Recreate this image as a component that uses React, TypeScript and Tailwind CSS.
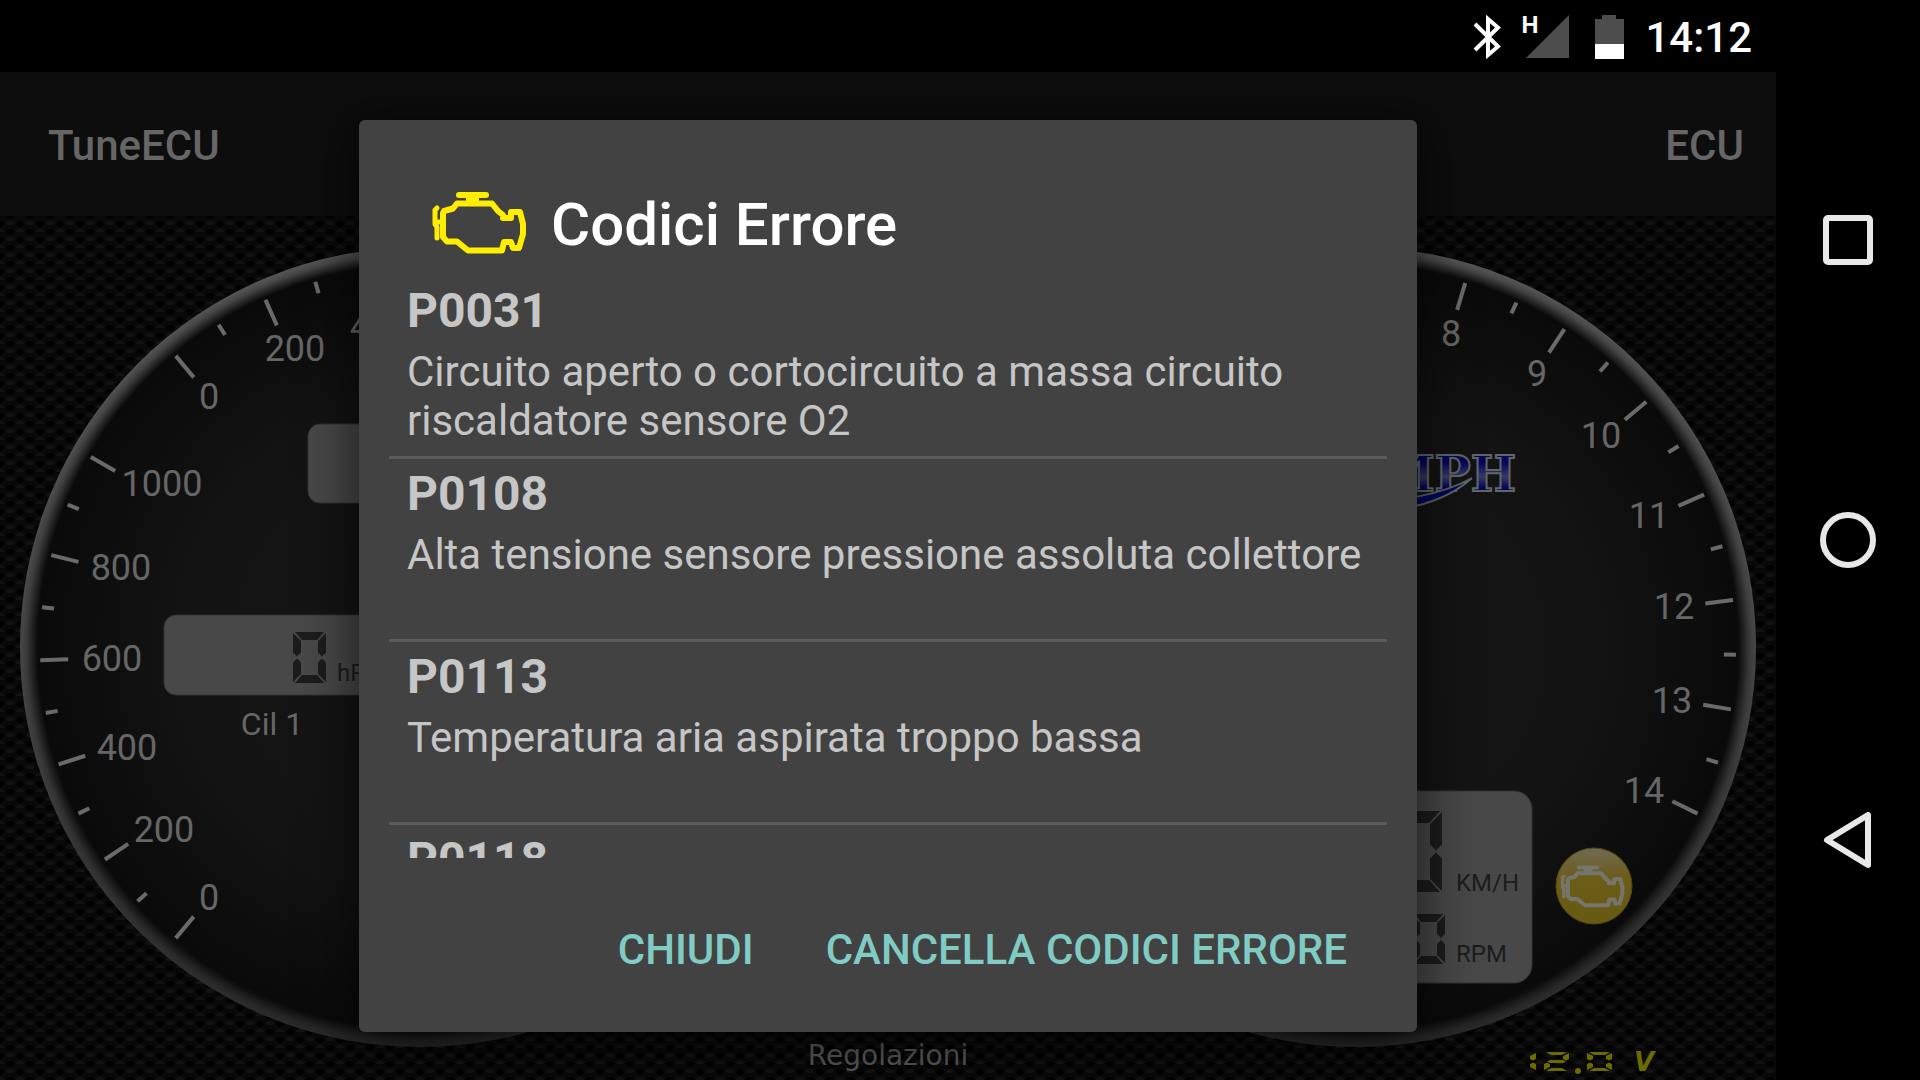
import React from "react";

const ERRORS: { code: string; text?: string }[] = [
  { code: "P0031", text: "Circuito aperto o cortocircuito a massa circuito riscaldatore sensore O2" },
  { code: "P0108", text: "Alta tensione sensore pressione assoluta collettore" },
  { code: "P0113", text: "Temperatura aria aspirata troppo bassa" },
  { code: "P0118" },
];

const SEGMENTS: Record<string, string> = {
  "0": "abcdef",
  "1": "bc",
  "2": "abged",
};

function Engine() {
  return (
    <g fill="none" stroke="currentColor" strokeWidth={6} strokeLinejoin="round">
      <path d="M23 30 L32 27.5 L36 22.5 H71 L77 30 L82 34 V37 H90 V31 L99 31 L102 43 V53 L98 67 H92 L90 61 H83 L81 69.5 H47 L36 60.5 H26 L22 56 V32 Z" />
      <path d="M38 14 H65" strokeLinecap="round" />
      <path d="M51.5 14 V23" strokeWidth={13} />
      <path d="M16 27 L14 29 V43 L16 46 V57 M16 41 H22" strokeWidth={5} strokeLinecap="round" />
    </g>
  );
}

/* One cell of a seven-segment readout: t is the thickness of the upright bars, v of the flat ones. */
function Segment({
  digit,
  x,
  y,
  w,
  h,
  t,
  v = t,
}: {
  digit: string;
  x: number;
  y: number;
  w: number;
  h: number;
  t: number;
  v?: number;
}) {
  const m = h / 2;
  const d = v / 2;
  const shapes: Record<string, string> = {
    a: `2,0 ${w - 2},0 ${w - t - 1},${v} ${t + 1},${v}`,
    d: `2,${h} ${w - 2},${h} ${w - t - 1},${h - v} ${t + 1},${h - v}`,
    f: `0,1 ${t},${v + 1} ${t},${m - d - 1} ${t / 2},${m - 1} 0,${m - d - 1}`,
    e: `0,${h - 1} ${t},${h - v - 1} ${t},${m + d + 1} ${t / 2},${m + 1} 0,${m + d + 1}`,
    b: `${w},1 ${w - t},${v + 1} ${w - t},${m - d - 1} ${w - t / 2},${m - 1} ${w},${m - d - 1}`,
    c: `${w},${h - 1} ${w - t},${h - v - 1} ${w - t},${m + d + 1} ${w - t / 2},${m + 1} ${w},${m + d + 1}`,
    g: `${t / 2},${m} ${t},${m - d} ${w - t},${m - d} ${w - t / 2},${m} ${w - t},${m + d} ${t},${m + d}`,
  };
  return (
    <g transform={`translate(${x} ${y})`}>
      {SEGMENTS[digit].split("").map((s) => (
        <polygon key={s} points={shapes[s]} />
      ))}
    </g>
  );
}

function Ticks({ cx, angles }: { cx: number; angles: { a: number; major: boolean }[] }) {
  return (
    <g stroke="#6a6a6a" strokeWidth={4}>
      {angles.map(({ a, major }) => {
        const r = (a * Math.PI) / 180;
        const inner = major ? 352 : 368;
        return (
          <line
            key={a}
            x1={cx + 380 * Math.cos(r)}
            y1={431 + 380 * Math.sin(r)}
            x2={cx + inner * Math.cos(r)}
            y2={431 + inner * Math.sin(r)}
          />
        );
      })}
    </g>
  );
}

const range = (start: number, step: number, n: number) =>
  Array.from({ length: n }, (_, i) => ({ a: start + step * i, major: i % 2 === 0 }));

const LEFT_TICKS = [...range(130, 8, 11), ...range(230, 8, 5)];
const RIGHT_TICKS = range(26, -8.275, 13);

const LABELS: [string, number, number][] = [
  ["0", 209, 193],
  ["200", 295, 145],
  ["400", 380, 123],
  ["1000", 162, 280],
  ["800", 121, 364],
  ["600", 112, 455],
  ["400", 127, 544],
  ["200", 164, 626],
  ["0", 209, 694],
  ["8", 1451, 130],
  ["9", 1537, 170],
  ["10", 1601, 232],
  ["11", 1649, 312],
  ["12", 1674, 403],
  ["13", 1672, 497],
  ["14", 1644, 587],
];

function Gauge({ cx, face }: { cx: number; face: string }) {
  return (
    <g>
      <circle cx={cx} cy={431} r={400} fill="url(#rim)" />
      <circle cx={cx} cy={431} r={400} fill={face} />
    </g>
  );
}

function FaceGradient({ id, cx }: { id: string; cx: number }) {
  return (
    <radialGradient id={id} gradientUnits="userSpaceOnUse" cx={cx} cy={431} r={400}>
      <stop offset="0" stopColor="#151515" />
      <stop offset="0.6" stopColor="#131313" />
      <stop offset="0.95" stopColor="#0a0a0a" />
      <stop offset="0.956" stopColor="#0a0a0a" />
      <stop offset="0.985" stopColor="#0a0a0a" stopOpacity="0.2" />
      <stop offset="1" stopColor="#0a0a0a" stopOpacity="0" />
    </radialGradient>
  );
}

function Dashboard() {
  return (
    <svg
      className="block h-full w-full"
      viewBox="0 0 1776 864"
      preserveAspectRatio="xMidYMid slice"
      fontFamily="Roboto, sans-serif"
      role="img"
      aria-label="Quadro strumenti"
    >
      <defs>
        <pattern id="mesh" width="20" height="16" patternUnits="userSpaceOnUse">
          <rect width="20" height="16" fill="#090909" />
          <ellipse cx="0" cy="8" rx="4" ry="3" fill="#010101" />
          <ellipse cx="20" cy="8" rx="4" ry="3" fill="#010101" />
          <ellipse cx="10" cy="0" rx="4" ry="3" fill="#010101" />
          <ellipse cx="10" cy="16" rx="4" ry="3" fill="#010101" />
          <ellipse cx="10" cy="7" rx="4" ry="2" fill="#131313" />
          <ellipse cx="0" cy="15" rx="4" ry="2" fill="#131313" />
          <ellipse cx="20" cy="15" rx="4" ry="2" fill="#131313" />
        </pattern>
        <linearGradient id="rim" x1="0" y1="0" x2="0" y2="1">
          <stop offset="0" stopColor="#585858" />
          <stop offset="0.5" stopColor="#484848" />
          <stop offset="1" stopColor="#2a2a2a" />
        </linearGradient>
        <FaceGradient id="faceLeft" cx={420} />
        <FaceGradient id="faceRight" cx={1356} />
        <linearGradient id="metal" x1="0" y1="0" x2="0" y2="1">
          <stop offset="0.3" stopColor="#05055c" />
          <stop offset="0.55" stopColor="#3a3a66" />
          <stop offset="0.75" stopColor="#03035a" />
        </linearGradient>
        <linearGradient id="lamp" x1="0" y1="0" x2="0" y2="1">
          <stop offset="0" stopColor="#706a55" />
          <stop offset="0.4" stopColor="#6b5c18" />
          <stop offset="1" stopColor="#675a12" />
        </linearGradient>
      </defs>

      <rect width="1776" height="864" fill="url(#mesh)" />
      <Gauge cx={420} face="url(#faceLeft)" />
      <Gauge cx={1356} face="url(#faceRight)" />
      <Ticks cx={420} angles={LEFT_TICKS} />
      <Ticks cx={1356} angles={RIGHT_TICKS} />

      <g fill="#666666" fontSize="36" textAnchor="middle">
        {LABELS.map(([t, x, y]) => (
          <text key={`${t}-${y}`} x={x} y={y}>
            {t}
          </text>
        ))}
      </g>

      <g fill="#484848" stroke="#333333">
        <rect x="308" y="208" width="230" height="79" rx="12" />
        <rect x="164" y="399" width="230" height="80" rx="12" />
        <rect x="1290" y="575" width="242" height="192" rx="18" />
      </g>
      <g fill="#1c1c1c">
        <Segment digit="0" x={293} y={416} w={33} h={51} t={8} />
        <Segment digit="0" x={1390} y={595} w={52} h={81} t={12} />
        <Segment digit="0" x={1412} y={698} w={33} h={50} t={8} />
        <g fontSize="24">
          <text x="337" y="465">
            hPa
          </text>
          <text x="1456" y="675">
            KM/H
          </text>
          <text x="1456" y="746">
            RPM
          </text>
        </g>
      </g>
      <text x="272" y="519" fontSize="32" textAnchor="middle" fill="#666666">
        Cil 1
      </text>

      <text
        x="1516"
        y="275"
        fontFamily="DejaVu Serif, serif"
        fontWeight="700"
        fontSize="48"
        textAnchor="end"
        fill="url(#metal)"
        stroke="#606668"
        strokeWidth="2"
      >
        TRIUMPH
      </text>
      <path
        d="M1340 296 Q1430 300 1472 262 Q1430 286 1340 288 Z"
        fill="#05055c"
        stroke="#606668"
        strokeWidth="2"
      />

      <circle cx="1594" cy="670" r="38" fill="url(#lamp)" stroke="#57480d" />
      <g transform="translate(1553 642) scale(0.68)" color="#75756c">
        <Engine />
      </g>

      <g fill="#6b6b00">
        <Segment digit="1" x={1512} y={836} w={24} h={19} t={6} v={3} />
        <Segment digit="2" x={1544} y={836} w={25} h={19} t={6} v={3} />
        <circle cx="1578" cy="855" r="3" />
        <Segment digit="0" x={1587} y={836} w={25} h={19} t={6} v={3} />
        <text
          x="1634"
          y="855"
          fontFamily="DejaVu Sans, sans-serif"
          fontSize="26"
          fontStyle="italic"
          fontWeight="700"
        >
          V
        </text>
      </g>
    </svg>
  );
}

function StatusBar() {
  return (
    <div className="flex h-18 shrink-0 items-center justify-end bg-black pt-0.5 pr-6 text-white">
      <svg className="h-11 w-7" viewBox="0 0 28 44" aria-label="Bluetooth" role="img">
        <path d="M2 9 L25 31.5 L15 40 V4 L25 12.5 L2 35" fill="none" stroke="#fff" strokeWidth="4" />
      </svg>
      <div className="relative ml-6 h-11 w-11">
        <svg className="h-11 w-11" viewBox="0 0 44 44" aria-hidden="true">
          <path d="M44 0 V43 H1 Z" fill="#4d4d4d" />
        </svg>
        <span className="absolute -top-1 -left-1 text-2xl leading-7 font-bold">H</span>
      </div>
      <svg className="ml-6 h-11 w-8" viewBox="0 0 32 44" aria-label="Batteria" role="img">
        <path d="M9 0 H23 V4 H31 V29 H2 V4 H9 Z" fill="#4d4d4d" />
        <rect x="2" y="29" width="29" height="15" fill="#fff" />
      </svg>
      <time className="ml-5 text-[42px] leading-[49px] font-medium">14:12</time>
    </div>
  );
}

function ErrorDialog() {
  return (
    <div className="absolute inset-0 flex items-center justify-center">
      <section
        role="dialog"
        aria-labelledby="dialog-title"
        className="flex w-[1058px] max-w-full flex-col rounded-md bg-[#424242] shadow-[0_8px_50px_10px_rgba(0,0,0,0.5)]"
      >
        <header className="flex items-center gap-5 px-[62px] pt-[70px] pb-4">
          <svg className="h-[70px] w-[110px] text-[#ffee00]" viewBox="0 9 110 70" aria-hidden="true">
            <Engine />
          </svg>
          <h1 id="dialog-title" className="text-[60px] leading-[70px] font-medium text-white">
            Codici Errore
          </h1>
        </header>
        <ul className="mx-[30px] h-[582px] overflow-hidden text-[#c6c6c6]">
          {ERRORS.map((e) => (
            <li key={e.code} className="min-h-[183px] border-b-[3px] border-[#5a5a5a] px-[18px] pt-[7px]">
              <h2 className="text-5xl leading-[56px] font-bold">{e.code}</h2>
              {e.text && <p className="mt-2 text-[42px] leading-[49px]">{e.text}</p>}
            </li>
          ))}
        </ul>
        <footer className="flex justify-end gap-6 pt-[43px] pr-[46px] pb-[34px] text-[42px] leading-[49px] font-medium text-[#80cbc4]">
          <button type="button" className="px-6 py-6">
            CHIUDI
          </button>
          <button type="button" className="px-6 py-6">
            CANCELLA CODICI ERRORE
          </button>
        </footer>
      </section>
    </div>
  );
}

function NavBar() {
  return (
    <nav className="flex w-36 shrink-0 flex-col items-center justify-center gap-[200px] bg-black">
      <button type="button" aria-label="Recenti">
        <svg className="h-[100px] w-[100px]" viewBox="0 0 100 100" fill="none" stroke="#e8e8e8" strokeWidth="6">
          <rect x="28" y="28" width="44" height="44" rx="2" />
        </svg>
      </button>
      <button type="button" aria-label="Home">
        <svg className="h-[100px] w-[100px]" viewBox="0 0 100 100" fill="none" stroke="#e8e8e8" strokeWidth="6">
          <circle cx="50" cy="50" r="25" />
        </svg>
      </button>
      <button type="button" aria-label="Indietro">
        <svg
          className="h-[100px] w-[100px]"
          viewBox="0 0 100 100"
          fill="none"
          stroke="#e8e8e8"
          strokeWidth="6"
          strokeLinejoin="round"
        >
          <path d="M29 50 L70 25 V75 Z" />
        </svg>
      </button>
    </nav>
  );
}

export default function App() {
  return (
    <div className="flex h-screen overflow-hidden bg-black font-[Roboto,sans-serif]">
      <div className="flex min-w-0 flex-1 flex-col">
        <StatusBar />
        <main className="relative flex min-h-0 flex-1 flex-col">
          <header className="flex h-36 shrink-0 items-center justify-between bg-[#0d0d0d] pt-0.5 pr-8 pl-12 text-[42px] leading-[49px] font-medium text-[#666666]">
            <span>TuneECU</span>
            <button type="button">ECU</button>
          </header>
          <div className="relative min-h-0 flex-1">
            <Dashboard />
            <button
              type="button"
              className="absolute inset-x-0 bottom-2 mx-auto w-fit font-['DejaVu_Sans',sans-serif] text-[28px] leading-8 text-[#5a5a5a]"
            >
              Regolazioni
            </button>
          </div>
          <ErrorDialog />
        </main>
      </div>
      <NavBar />
    </div>
  );
}
